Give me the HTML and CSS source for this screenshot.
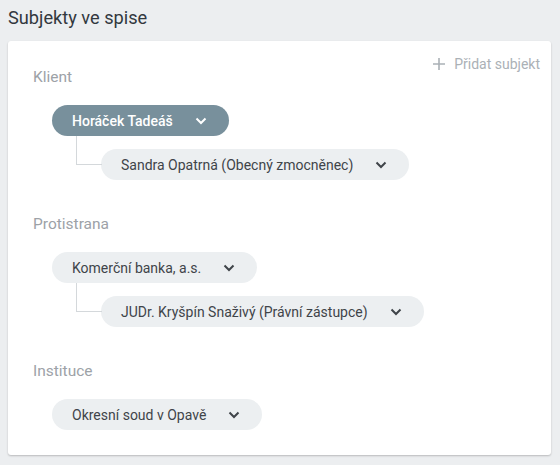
FILE: index.html
```html
<!DOCTYPE html>
<html lang="cs">
<head>
<meta charset="utf-8">
<link rel="stylesheet" href="styles.css">
</head>
<body>
<h1 class="title">Subjekty ve spise</h1>
<div class="card">
  <section class="group">
    <div class="group-head">
      <div class="label">Klient</div>
      <button class="add"><svg width="14" height="14" viewBox="0 0 14 14"><path d="M7 1v12M1 7h12" stroke="currentColor" stroke-width="1.6" fill="none"/></svg><span>Přidat subjekt</span></button>
    </div>
    <div class="tree">
      <div class="chip chip-main">Horáček Tadeáš<svg class="chev" width="12" height="8" viewBox="0 0 12 8"><path d="M1.5 1.5 6 6l4.5-4.5" stroke="currentColor" stroke-width="2" fill="none"/></svg></div>
      <div class="child">
        <div class="chip">Sandra Opatrná (Obecný zmocněnec)<svg class="chev" width="12" height="8" viewBox="0 0 12 8"><path d="M1.5 1.5 6 6l4.5-4.5" stroke="currentColor" stroke-width="2" fill="none"/></svg></div>
      </div>
    </div>
  </section>
  <section class="group">
    <div class="group-head"><div class="label">Protistrana</div></div>
    <div class="tree">
      <div class="chip">Komerční banka, a.s.<svg class="chev" width="12" height="8" viewBox="0 0 12 8"><path d="M1.5 1.5 6 6l4.5-4.5" stroke="currentColor" stroke-width="2" fill="none"/></svg></div>
      <div class="child">
        <div class="chip">JUDr. Kryšpín Snaživý (Právní zástupce)<svg class="chev" width="12" height="8" viewBox="0 0 12 8"><path d="M1.5 1.5 6 6l4.5-4.5" stroke="currentColor" stroke-width="2" fill="none"/></svg></div>
      </div>
    </div>
  </section>
  <section class="group">
    <div class="group-head"><div class="label">Instituce</div></div>
    <div class="tree">
      <div class="chip">Okresní soud v Opavě<svg class="chev" width="12" height="8" viewBox="0 0 12 8"><path d="M1.5 1.5 6 6l4.5-4.5" stroke="currentColor" stroke-width="2" fill="none"/></svg></div>
    </div>
  </section>
</div>
</body>
</html>
```
FILE: styles.css
```css
* { box-sizing: border-box; }
html, body { margin: 0; padding: 0; }
body {
  background: #eceef0;
  font-family: Roboto, "Noto Sans", sans-serif;
  color: #3c4146;
  width: 560px;
  height: 465px;
  overflow: hidden;
}
.title {
  margin: 0;
  height: 41px;
  padding: 7px 0 0 8px;
  font-size: 18.2px;
  font-weight: 400;
  line-height: 22px;
  color: #32383e;
}
.card {
  margin: 0 9px 0 8px;
  background: #fff;
  border-radius: 3px;
  box-shadow: 0 1px 2px rgba(0,0,0,0.22);
  padding: 15px 11px 25px 25px;
  height: 414px;
  display: flex;
  flex-direction: column;
  gap: 34px;
}
.group-head {
  display: flex;
  justify-content: space-between;
  align-items: flex-start;
}
.label {
  font-size: 15.5px;
  line-height: 18px;
  padding-top: 1px;
  color: #9da2a7;
}
.group:first-child .label { margin-top: 11px; }
.add {
  display: flex;
  align-items: center;
  gap: 8px;
  border: 0;
  background: none;
  padding: 0;
  font: inherit;
  font-size: 14px;
  line-height: 18px;
  color: #abb1b6;
  margin-top: -1px;
}
.tree {
  margin: 19px 0 0 19px;
  display: flex;
  flex-direction: column;
  align-items: flex-start;
}
.chip {
  height: 31px;
  border-radius: 16px;
  background: #eceff1;
  color: #3f4449;
  font-size: 14px;
  display: inline-flex;
  align-items: center;
  padding: 0 22px 0 20px;
  white-space: nowrap;
}
.chip .chev { margin-left: 22px; color: #3f4449; }
.chip-main {
  background: #78909c;
  color: #fff;
  font-weight: 500;
}
.chip-main .chev { color: #fff; }
.child {
  margin: 13px 0 0 24px;
  padding-left: 25px;
  position: relative;
}
.child::before {
  content: "";
  position: absolute;
  left: 0;
  top: -13px;
  width: 25px;
  height: 28px;
  border-left: 1px solid #d4d8db;
  border-bottom: 1px solid #d4d8db;
}
```
